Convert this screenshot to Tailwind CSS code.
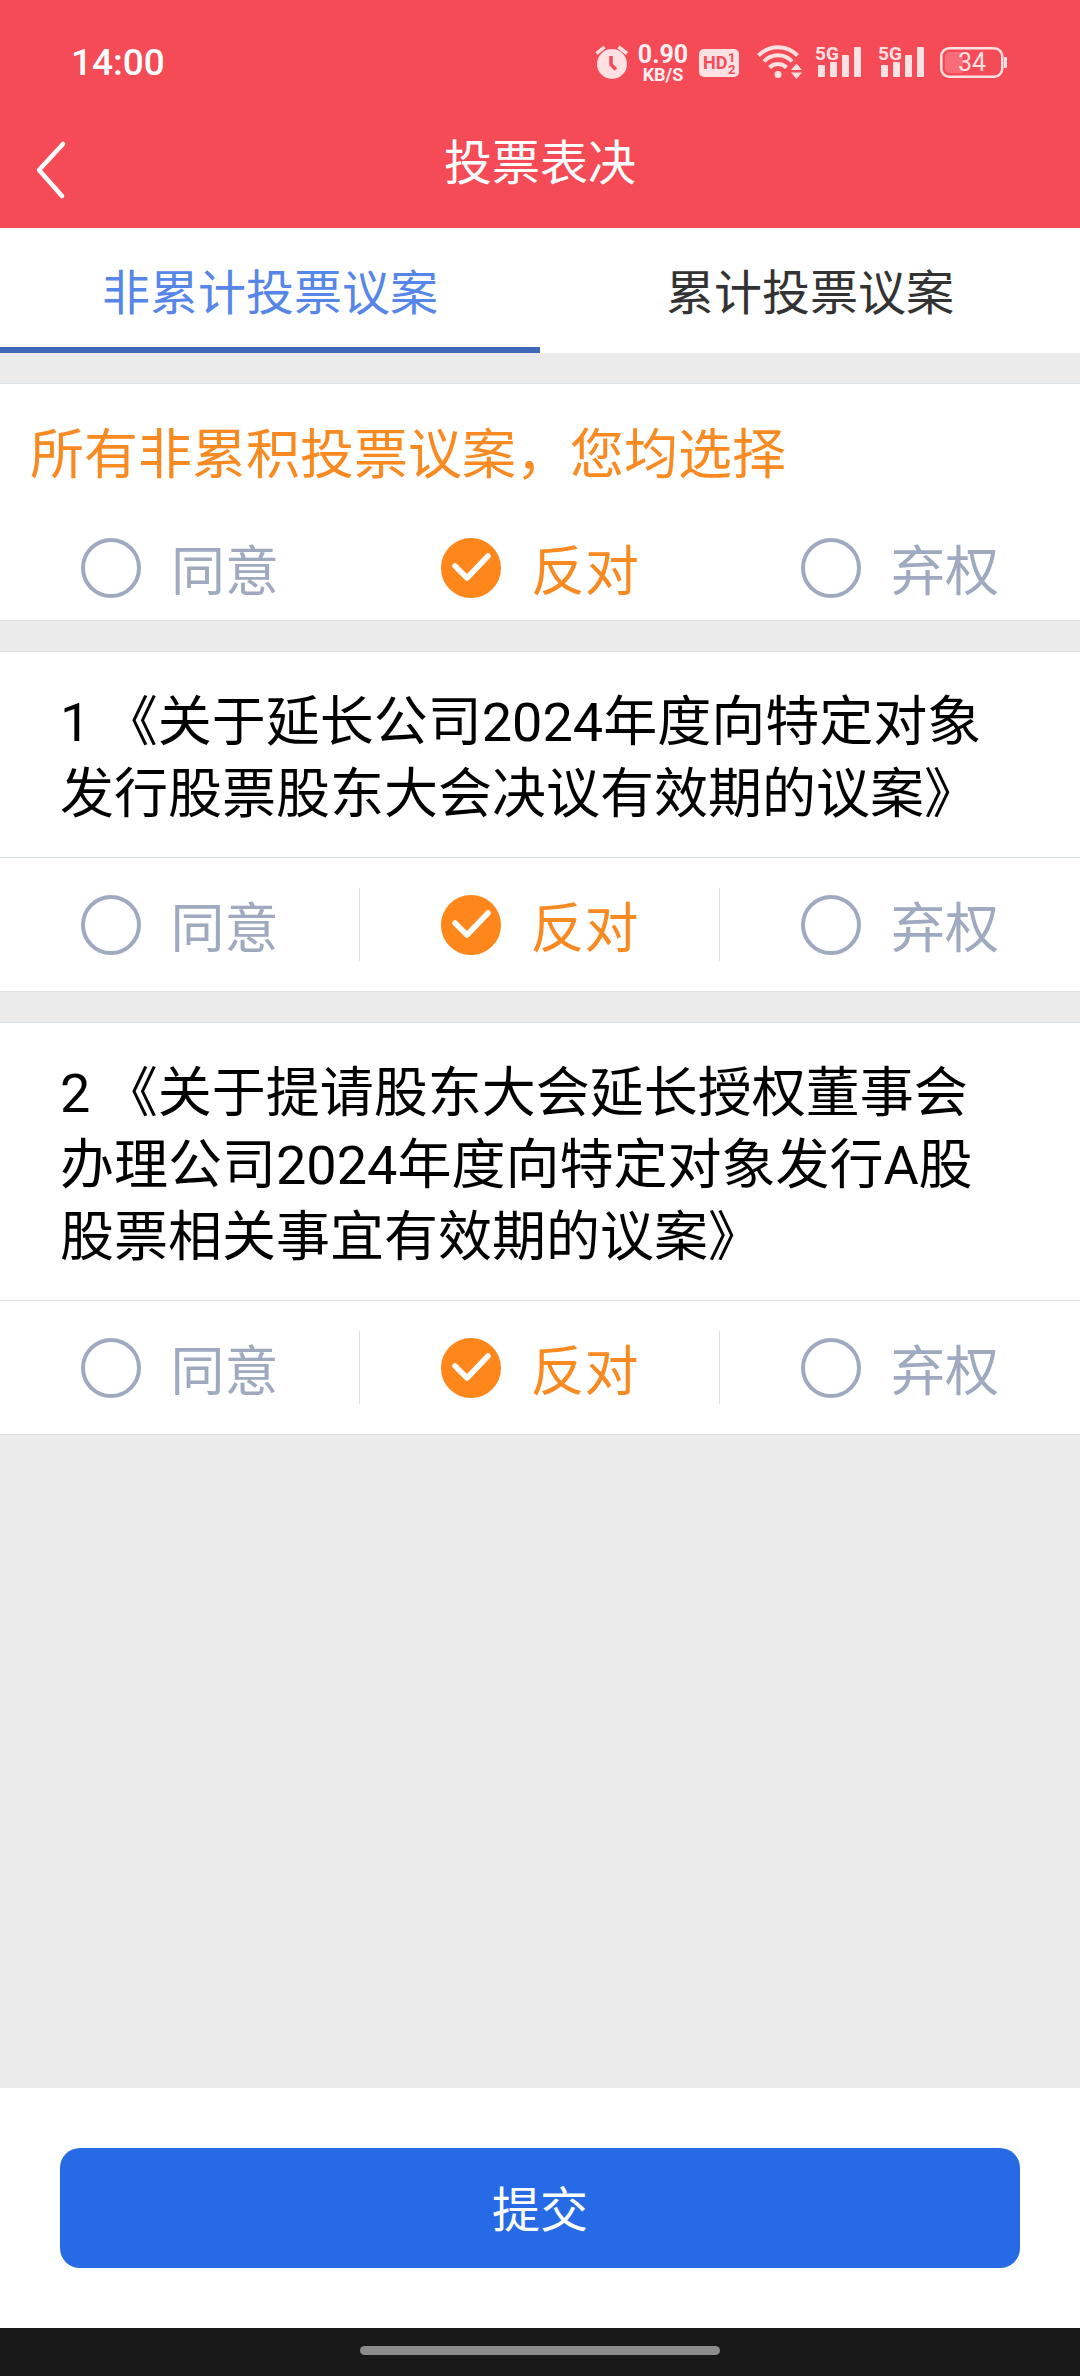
<!DOCTYPE html>
<html lang="zh-CN">
<head>
<meta charset="utf-8">
<meta name="viewport" content="width=device-width, initial-scale=1">
<title>投票表决</title>
<script src="https://cdn.jsdelivr.net/npm/@tailwindcss/browser@4"></script>
</head>
<body class="flex min-h-screen flex-col bg-[#ebebeb] font-['Noto_Sans_CJK_SC',sans-serif] text-black">

<!-- Shared symbols -->
<svg class="hidden" aria-hidden="true">
  <symbol id="tick" viewBox="0 0 60 60"><path d="M14 28 26 40 47 18" fill="none" stroke="#fff" stroke-width="5.500" stroke-linecap="round" stroke-linejoin="round"/></symbol>
  <symbol id="bars" viewBox="0 0 47 36">
    <g fill="currentColor">
      <rect x="3" y="21" width="7" height="12" rx="1"/>
      <rect x="15" y="18" width="7" height="15" rx="1"/>
      <rect x="27" y="11" width="7" height="22" rx="1"/>
      <rect x="39" y="3" width="7" height="30" rx="1"/>
    </g>
  </symbol>
</svg>

<header class="bg-[#f54b57] text-white">
  <!-- System status bar -->
  <div class="flex h-[124px] items-center justify-between pr-[73px] pl-[71px] font-['Roboto',sans-serif]">
    <time class="pt-[2px] text-[37px] leading-[48px] font-medium">14:00</time>
    <div class="flex items-center text-[#ffe1e4]">
      <svg class="h-[36px] w-[34px]" viewBox="0 0 34 36" role="img" aria-label="闹钟">
        <circle cx="17" cy="20" r="15" fill="currentColor"/>
        <path d="M1.500 9.500 9.500 3M23.500 3 32 9.500" stroke="currentColor" stroke-width="3.500"/>
        <path d="M16 12v8.500l5 5" fill="none" stroke="#f54b57" stroke-width="3.500"/>
      </svg>
      <div class="ml-[8px] flex w-[52px] flex-col items-center pt-[4px] font-bold text-[#fff0f1]">
        <span class="text-[25px] leading-[22px]">0.90</span>
        <span class="text-[18px] leading-[18px]">KB/S</span>
      </div>
      <svg class="ml-[10px] h-[36px] w-[40px]" viewBox="0 0 40 36" role="img" aria-label="HD">
        <rect y="5" width="40" height="28" rx="5" fill="currentColor"/>
        <g fill="#f54b57" font-weight="700">
          <text x="4" y="25" font-size="18">HD</text>
          <text x="29" y="18" font-size="13">1</text>
          <text x="29" y="30" font-size="13">2</text>
        </g>
      </svg>
      <svg class="ml-[18px] h-[36px] w-[46px]" viewBox="0 0 46 36" role="img" aria-label="无线网络">
        <g fill="none" stroke="currentColor" stroke-width="4">
          <path d="M1.500 11.500a27 27 0 0 1 39 0"/>
          <path d="M7 17.500a19 19 0 0 1 28 0"/>
          <path d="M12.500 23.500a12 12 0 0 1 17 0"/>
        </g>
        <circle cx="21" cy="30.500" r="3.500" fill="currentColor"/>
        <path d="M39.500 19.500 45 26H34zM39.500 35 45 28.500H34z" fill="currentColor"/>
      </svg>
      <svg class="ml-[12px] h-[36px] w-[47px] overflow-visible" viewBox="0 0 47 36" role="img" aria-label="5G 信号">
        <use href="#bars"/>
        <text x="0" y="16" font-size="19" font-weight="700" fill="currentColor" stroke="#f54b57" stroke-width="3" paint-order="stroke">5G</text>
      </svg>
      <svg class="ml-[16px] h-[36px] w-[47px] overflow-visible" viewBox="0 0 47 36" role="img" aria-label="5G 信号">
        <use href="#bars"/>
        <text x="0" y="16" font-size="19" font-weight="700" fill="currentColor" stroke="#f54b57" stroke-width="3" paint-order="stroke">5G</text>
      </svg>
      <svg class="ml-[15px] h-[36px] w-[67px]" viewBox="0 0 67 36" role="img" aria-label="电量">
        <rect x="1.250" y="4.250" width="61" height="28.500" rx="8" fill="none" stroke="currentColor" stroke-width="2.500"/>
        <path d="M10 8h13v21H10q-5 0-5-5V13q0-5 5-5z" fill="#f86d78"/>
        <rect x="64" y="13" width="3" height="11" rx="1" fill="currentColor"/>
        <text x="18" y="27" font-size="25" fill="currentColor">34</text>
      </svg>
    </div>
  </div>
  <!-- Title bar -->
  <div class="grid h-[104px] grid-cols-[1fr_auto_1fr] items-start">
    <a href="#" aria-label="返回" class="mt-[14px] ml-[31px] w-[40px]">
      <svg class="h-[64px] w-[40px]" viewBox="0 0 40 64" fill="none" stroke="currentColor" stroke-width="4.500" stroke-linecap="round" stroke-linejoin="round"><path d="M32 6 8 32l23 26"/></svg>
    </a>
    <h1 class="text-[48px] leading-[70px]">投票表决</h1>
  </div>
</header>

<nav class="grid grid-cols-2 bg-white text-center text-[48px] leading-[72px]">
  <a href="#" aria-current="page" class="border-b-[6px] border-[#4068b8] pt-[25px] pb-[22px] text-[#5686e8]">非累计投票议案</a>
  <a href="#" class="border-b-[6px] border-transparent pt-[25px] pb-[22px] text-[#333]">累计投票议案</a>
</nav>

<main class="flex flex-1 flex-col gap-[30px] py-[30px] text-[54px] leading-[72px]">

  <fieldset class="border-y border-[#d9e0e6] bg-white pb-[16px]">
    <legend class="float-left w-full px-[30px] pt-[31px] pb-[44px] text-[#f98a22]">所有非累积投票议案，您均选择</legend>
    <div class="clear-both grid grid-cols-3">
      <label class="flex h-[73px] items-center justify-center gap-[30px] text-[#9faac0] has-checked:text-[#f98a22]">
        <span class="grid"><input type="radio" name="all" class="peer col-start-1 row-start-1 size-[60px] appearance-none rounded-full border-4 border-[#9faac0] checked:border-[#ff861b] checked:bg-[#ff861b]"><svg class="invisible col-start-1 row-start-1 size-[60px] peer-checked:visible"><use href="#tick"/></svg></span>同意</label>
      <label class="flex h-[73px] items-center justify-center gap-[30px] text-[#9faac0] has-checked:text-[#f98a22]">
        <span class="grid"><input type="radio" name="all" checked class="peer col-start-1 row-start-1 size-[60px] appearance-none rounded-full border-4 border-[#9faac0] checked:border-[#ff861b] checked:bg-[#ff861b]"><svg class="invisible col-start-1 row-start-1 size-[60px] peer-checked:visible"><use href="#tick"/></svg></span>反对</label>
      <label class="flex h-[73px] items-center justify-center gap-[30px] text-[#9faac0] has-checked:text-[#f98a22]">
        <span class="grid"><input type="radio" name="all" class="peer col-start-1 row-start-1 size-[60px] appearance-none rounded-full border-4 border-[#9faac0] checked:border-[#ff861b] checked:bg-[#ff861b]"><svg class="invisible col-start-1 row-start-1 size-[60px] peer-checked:visible"><use href="#tick"/></svg></span>弃权</label>
    </div>
  </fieldset>

  <section class="border-y border-[#d9e0e6] bg-white">
    <h2 id="m1" class="border-b border-[#d9e0e6] px-[60px] pt-[35px] pb-[26px] font-['Roboto','Noto_Sans_CJK_SC',sans-serif]">1 《关于延长公司2024年度向特定对象发行股票股东大会决议有效期的议案》</h2>
    <div role="radiogroup" aria-labelledby="m1" class="grid grid-cols-3 divide-x divide-[#d9e0e6] py-[30px]">
      <label class="flex h-[73px] items-center justify-center gap-[30px] text-[#9faac0] has-checked:text-[#f98a22]">
        <span class="grid"><input type="radio" name="q1" class="peer col-start-1 row-start-1 size-[60px] appearance-none rounded-full border-4 border-[#9faac0] checked:border-[#ff861b] checked:bg-[#ff861b]"><svg class="invisible col-start-1 row-start-1 size-[60px] peer-checked:visible"><use href="#tick"/></svg></span>同意</label>
      <label class="flex h-[73px] items-center justify-center gap-[30px] text-[#9faac0] has-checked:text-[#f98a22]">
        <span class="grid"><input type="radio" name="q1" checked class="peer col-start-1 row-start-1 size-[60px] appearance-none rounded-full border-4 border-[#9faac0] checked:border-[#ff861b] checked:bg-[#ff861b]"><svg class="invisible col-start-1 row-start-1 size-[60px] peer-checked:visible"><use href="#tick"/></svg></span>反对</label>
      <label class="flex h-[73px] items-center justify-center gap-[30px] text-[#9faac0] has-checked:text-[#f98a22]">
        <span class="grid"><input type="radio" name="q1" class="peer col-start-1 row-start-1 size-[60px] appearance-none rounded-full border-4 border-[#9faac0] checked:border-[#ff861b] checked:bg-[#ff861b]"><svg class="invisible col-start-1 row-start-1 size-[60px] peer-checked:visible"><use href="#tick"/></svg></span>弃权</label>
    </div>
  </section>

  <section class="border-y border-[#d9e0e6] bg-white">
    <h2 id="m2" class="border-b border-[#d9e0e6] px-[60px] pt-[35px] pb-[26px] font-['Roboto','Noto_Sans_CJK_SC',sans-serif]">2 《关于提请股东大会延长授权董事会办理公司2024年度向特定对象发行A股股票相关事宜有效期的议案》</h2>
    <div role="radiogroup" aria-labelledby="m2" class="grid grid-cols-3 divide-x divide-[#d9e0e6] py-[30px]">
      <label class="flex h-[73px] items-center justify-center gap-[30px] text-[#9faac0] has-checked:text-[#f98a22]">
        <span class="grid"><input type="radio" name="q2" class="peer col-start-1 row-start-1 size-[60px] appearance-none rounded-full border-4 border-[#9faac0] checked:border-[#ff861b] checked:bg-[#ff861b]"><svg class="invisible col-start-1 row-start-1 size-[60px] peer-checked:visible"><use href="#tick"/></svg></span>同意</label>
      <label class="flex h-[73px] items-center justify-center gap-[30px] text-[#9faac0] has-checked:text-[#f98a22]">
        <span class="grid"><input type="radio" name="q2" checked class="peer col-start-1 row-start-1 size-[60px] appearance-none rounded-full border-4 border-[#9faac0] checked:border-[#ff861b] checked:bg-[#ff861b]"><svg class="invisible col-start-1 row-start-1 size-[60px] peer-checked:visible"><use href="#tick"/></svg></span>反对</label>
      <label class="flex h-[73px] items-center justify-center gap-[30px] text-[#9faac0] has-checked:text-[#f98a22]">
        <span class="grid"><input type="radio" name="q2" class="peer col-start-1 row-start-1 size-[60px] appearance-none rounded-full border-4 border-[#9faac0] checked:border-[#ff861b] checked:bg-[#ff861b]"><svg class="invisible col-start-1 row-start-1 size-[60px] peer-checked:visible"><use href="#tick"/></svg></span>弃权</label>
    </div>
  </section>
</main>

<footer>
  <div class="bg-white p-[60px]">
    <button type="button" class="h-[120px] w-full rounded-[20px] bg-[#266be5] pb-1 text-[48px] leading-[72px] text-white">提交</button>
  </div>
  <!-- System gesture bar -->
  <div class="flex h-[48px] justify-center bg-[#191919] pt-[18px]">
    <div class="h-[9px] w-1/3 rounded-full bg-[#8c8c8c]"></div>
  </div>
</footer>
</body>
</html>
